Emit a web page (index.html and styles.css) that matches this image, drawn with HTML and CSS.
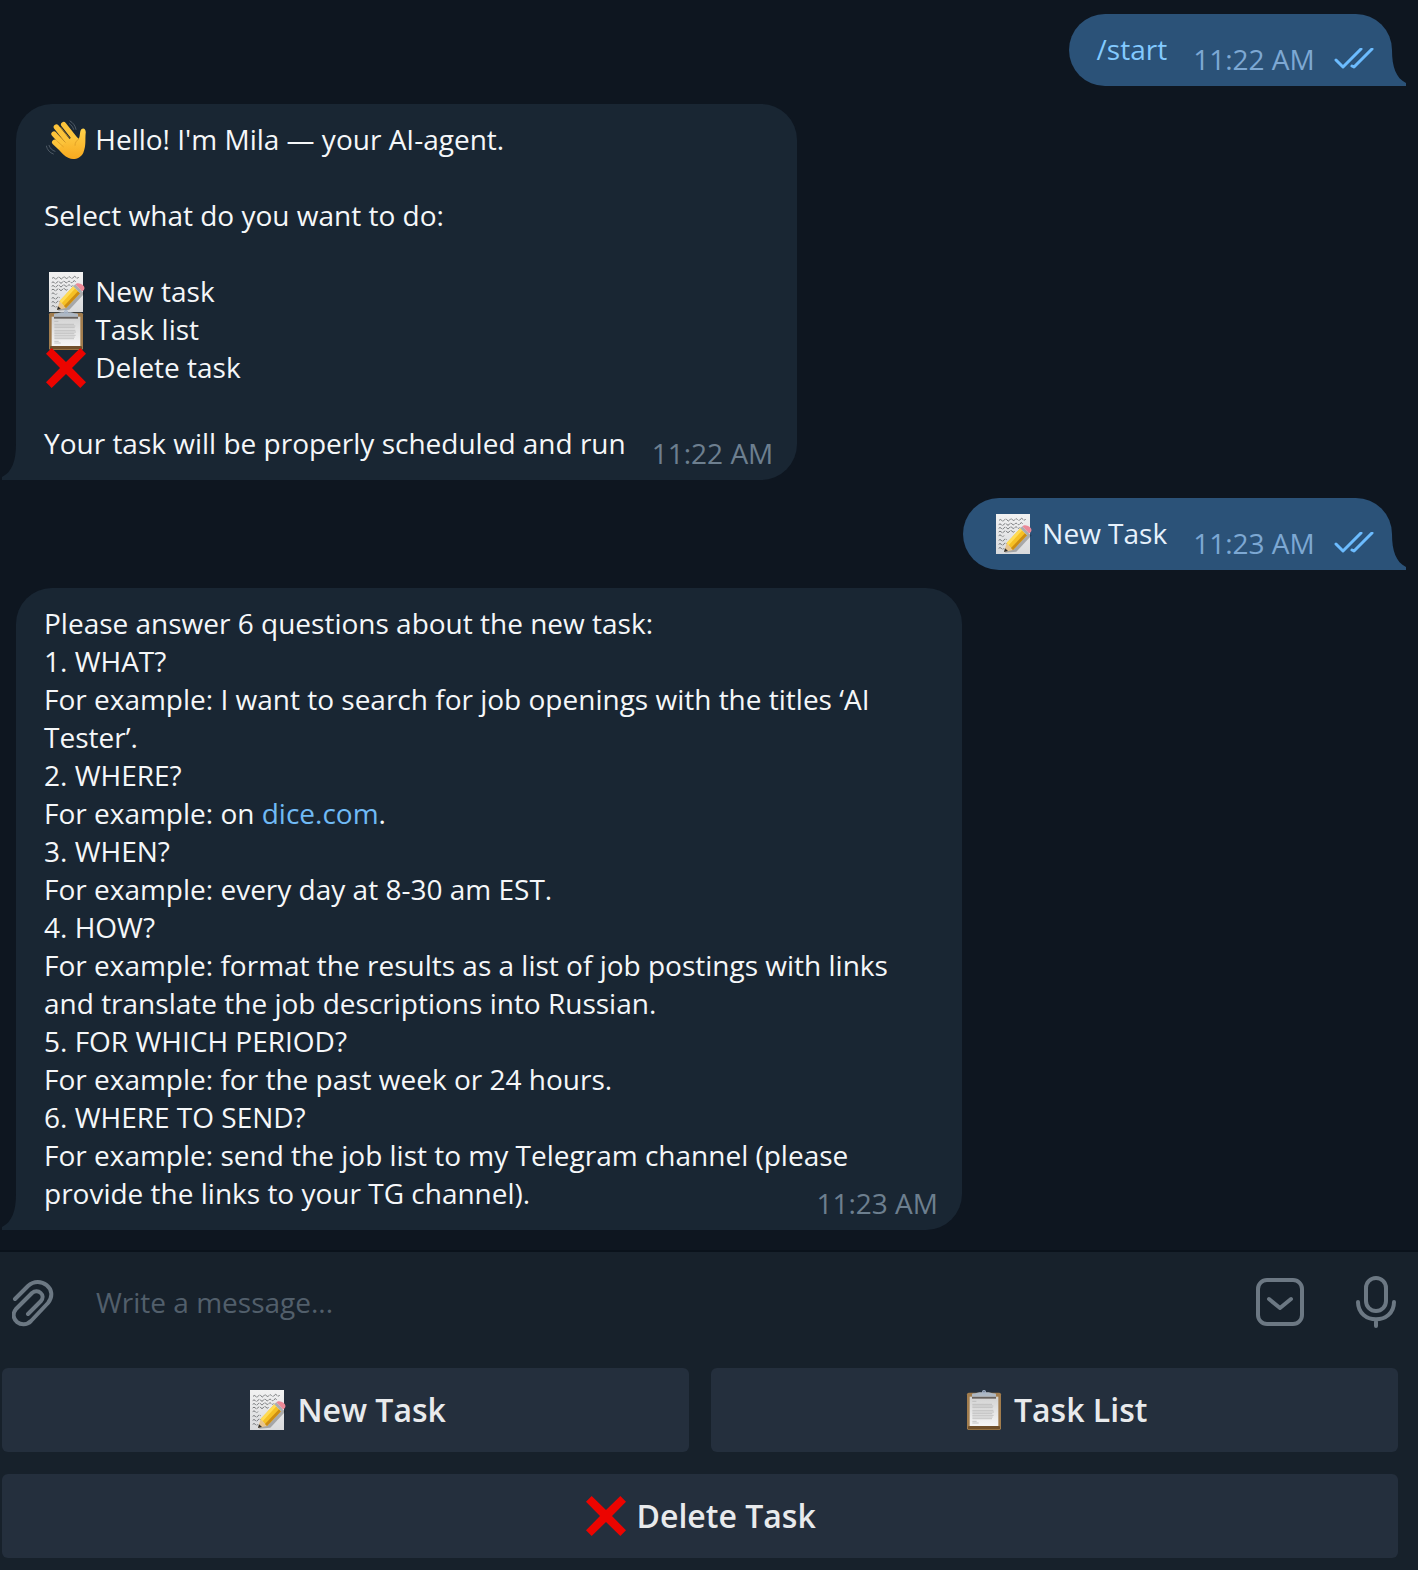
FILE: index.html
```html
<!DOCTYPE html>
<html lang="en">
<head>
  <meta charset="UTF-8" />
  <meta name="viewport" content="width=device-width, initial-scale=1.0"/>
  <title>Mila AI-agent Chat</title>
  <link rel="stylesheet" href="styles.css">
</head>
<body>

  <!-- Shared icons -->
  <svg class="icon-defs" aria-hidden="true">
    <defs>
      <linearGradient id="handFill" x1="0" y1="0" x2="0" y2="1">
        <stop offset="0" stop-color="#ffd24a"/>
        <stop offset="1" stop-color="#f7a91f"/>
      </linearGradient>
      <linearGradient id="paperFill" x1="0" y1="0" x2="0" y2="1">
        <stop offset="0" stop-color="#f2f2f2"/>
        <stop offset="1" stop-color="#d9dadc"/>
      </linearGradient>
      <linearGradient id="sheetFill" x1="0" y1="0" x2="0" y2="1">
        <stop offset="0" stop-color="#d2d2d2"/>
        <stop offset="1" stop-color="#f6f6f6"/>
      </linearGradient>
    </defs>

    <symbol id="wave" viewBox="0 0 120 120">
      <g stroke="#fcc33a" stroke-width="16" stroke-linecap="round" fill="none">
        <path d="M53 14 L88 58"/>
        <path d="M31 21 L72 72"/>
        <path d="M24 42 L64 86"/>
        <path d="M26 67 L60 98"/>
      </g>
      <path d="M52 72 L84 46 L98 56 C103 51 100 36 106 28 C113 21 121 29 119 40 C117 58 121 78 112 98 C104 115 83 121 68 114 C56 109 46 98 38 86 Z" fill="url(#handFill)"/>
      <g stroke="#d6941f" stroke-width="2" stroke-linecap="round" fill="none">
        <path d="M44 22 L70 54 M35 43 L58 67 M35 65 L52 80"/>
        <path d="M98 57 C91 62 87 68 87 76"/>
      </g>
      <g stroke="#68727d" stroke-width="2" stroke-linecap="round" fill="none">
        <path d="M72 3 C81 8 88 17 90 28 M70 11 C76 15 81 21 83 28"/>
        <path d="M1 78 C4 90 11 98 22 102 M9 76 C12 85 18 91 27 94"/>
      </g>
    </symbol>

    <symbol id="memo" viewBox="0 0 120 120">
      <path d="M9 0 H111 V120 H9 Z" fill="url(#paperFill)"/>
      <g stroke="#3f4246" stroke-width="2" fill="none" stroke-dasharray="13 2 8 3 17 2">
        <path d="M18 19 q4 -5 8 0 t8 -1 t8 0 t8 0 t8 -1 t8 0 t8 0 t8 -1 t8 0 t8 -1"/>
        <path d="M17 32 q4 -5 8 0 t8 -1 t8 0 t8 0 t8 -1 t8 0 t8 0 t8 -1 t8 0"/>
        <path d="M17 43 q4 -5 8 0 t8 -1 t8 0 t8 0 t8 -1 t8 0 t8 0 t8 -1"/>
        <path d="M17 54 q4 -5 8 0 t8 -1 t8 0 t8 0 t8 -1 t8 0"/>
        <path d="M17 65 q4 -5 8 0 t8 0"/>
        <path d="M17 79 q4 -5 8 0 t8 -1 t8 0"/>
        <path d="M17 91 q4 -5 8 0 t8 -1 t8 0"/>
        <path d="M17 103 q4 -5 8 0 t8 0"/>
      </g>
      <path d="M35 116 L70 113 L116 64 L106 58 Z" fill="#000" opacity="0.25"/>
      <path d="M33 114 L41 87 L60 108 Z" fill="#e8c48d"/>
      <path d="M33 114 L36 103 L45 111 Z" fill="#2e2e2e"/>
      <path d="M41 87 L82 43 L102 64 L60 108 Z" fill="#f6c125"/>
      <path d="M41 87 L82 43 L88 49 L47 94 Z" fill="#ffdc55"/>
      <path d="M54 102 L96 58 L102 64 L60 108 Z" fill="#cd8d13"/>
      <path d="M82 43 L88 37 L108 58 L102 64 Z" fill="#a9adb0"/>
      <path d="M88 37 C93 31 103 33 110 39 C117 45 118 53 108 58 Z" fill="#ec8997"/>
    </symbol>

    <symbol id="clipboard" viewBox="0 0 120 120">
      <rect x="9" y="8" width="102" height="112" rx="5" fill="#a17c4d"/>
      <rect x="12" y="108" width="96" height="10" rx="3" fill="#70502b"/>
      <rect x="17" y="20" width="86" height="88" fill="url(#sheetFill)"/>
      <path d="M24 20 H96 V26 H24 Z" fill="#66615e"/>
      <path d="M24 13 Q24 10 34 10 L46 7 H74 L86 10 Q96 10 96 13 V20 H24 Z" fill="#aeb8c4"/>
      <circle cx="60" cy="6" r="4" fill="none" stroke="#a6b5ca" stroke-width="4"/>
      <g stroke="#b1b1b1" stroke-width="2">
        <path d="M25 34 H37 M25 43 H84 M25 48 H88 M25 53 H86 M25 61 H88 M25 66 H90 M25 71 H85 M25 76 H89 M25 81 H86 M25 86 H84 M25 94 H38 M25 99 H44"/>
      </g>
    </symbol>

    <symbol id="cross" viewBox="0 0 120 120">
      <path d="M17 0 L60 42 L103 0 L120 17 L78 60 L120 103 L103 120 L60 78 L17 120 L0 103 L42 60 L0 17 Z" fill="#ec0400"/>
    </symbol>

    <symbol id="ticks" viewBox="0 0 40 22">
      <path d="M2 12 L9 19 L27 1 M18 18 L20 19 L38 1" fill="none" stroke="#6cbcff" stroke-width="3" stroke-linecap="round" stroke-linejoin="round"/>
    </symbol>

    <symbol id="tail" viewBox="0 0 14 36">
      <path d="M0 0 C0 17 4 28 14 33 V36 H0 Z"/>
    </symbol>
  </svg>

  <!-- Messages -->
  <main class="chat">
    <div class="message outgoing">
      <a class="link" href="#start">/start</a>
      <span class="time">11:22 AM <svg class="ticks"><use href="#ticks"/></svg></span>
      <svg class="tail"><use href="#tail"/></svg>
    </div>

    <div class="message incoming">
      <svg class="emoji"><use href="#wave"/></svg> Hello! I'm Mila — your AI-agent.<br>
      <br>
      Select what do you want to do:<br>
      <br>
      <svg class="emoji"><use href="#memo"/></svg> New task<br>
      <svg class="emoji"><use href="#clipboard"/></svg> Task list<br>
      <svg class="emoji"><use href="#cross"/></svg> Delete task<br>
      <br>
      Your task will be properly scheduled and run
      <span class="time">11:22 AM</span>
      <svg class="tail"><use href="#tail"/></svg>
    </div>

    <div class="message outgoing">
      <svg class="emoji"><use href="#memo"/></svg> New Task
      <span class="time">11:23 AM <svg class="ticks"><use href="#ticks"/></svg></span>
      <svg class="tail"><use href="#tail"/></svg>
    </div>

    <div class="message incoming">
      Please answer 6 questions about the new task:<br>
      1. WHAT?<br>
      For example: I want to search for job openings with the titles ‘AI Tester’.<br>
      2. WHERE?<br>
      For example: on <a class="link" href="#dice">dice.com</a>.<br>
      3. WHEN?<br>
      For example: every day at 8-30 am EST.<br>
      4. HOW?<br>
      For example: format the results as a list of job postings with links and translate the job descriptions into Russian.<br>
      5. FOR WHICH PERIOD?<br>
      For example: for the past week or 24 hours.<br>
      6. WHERE TO SEND?<br>
      For example: send the job list to my Telegram channel (please provide the links to your TG channel).
      <span class="time">11:23 AM</span>
      <svg class="tail"><use href="#tail"/></svg>
    </div>
  </main>

  <!-- Message input and bot keyboard -->
  <footer class="composer">
    <form class="input-row">
      <button type="button" class="icon-btn" aria-label="Attach file">
        <svg width="42" height="52" viewBox="0 -4 42 52">
          <path d="M3 19 L16 6 C28 -5 47 9 36 23 L19 41 C10 50 -4 39 4 29 L20 13 C26 8 34 15 29 21 L16 34"/>
        </svg>
      </button>
      <input type="text" id="messageInput" placeholder="Write a message..." aria-label="Write a message" />
      <button type="button" class="icon-btn" aria-label="Hide keyboard">
        <svg width="48" height="48" viewBox="0 0 48 48">
          <rect x="2" y="2" width="44" height="44" rx="9"/>
          <path d="M13 21 L24 30 L35 21"/>
        </svg>
      </button>
      <button type="button" class="icon-btn" aria-label="Record voice message">
        <svg width="40" height="52" viewBox="0 0 40 52">
          <rect x="10" y="2" width="20" height="33" rx="10"/>
          <path d="M2 26 C2 49 38 49 38 26 M20 44 V50"/>
        </svg>
      </button>
    </form>
    <div class="keyboard">
      <button type="button"><svg class="emoji"><use href="#memo"/></svg> New Task</button>
      <button type="button"><svg class="emoji"><use href="#clipboard"/></svg> Task List</button>
      <button type="button" class="wide"><svg class="emoji"><use href="#cross"/></svg> Delete Task</button>
    </div>
  </footer>

</body>
</html>
```
FILE: styles.css
```css
* {
  box-sizing: border-box;
}
body {
  font-family: "Open Sans", "Noto Sans", sans-serif;
  font-size: 28px;
  line-height: 38px;
  color: #f5f7f9;
  background: #0e1620;
  margin: 0;
  min-height: 100vh;
  display: flex;
  flex-direction: column;
}
.icon-defs {
  position: absolute;
  width: 0;
  height: 0;
}

/* Messages */
.chat {
  flex: 1;
  display: flex;
  flex-direction: column;
  gap: 18px;
  padding: 14px 26px 20px 16px;
}
.message {
  position: relative;
  max-width: 946px;
  padding: 16px 24px 18px 28px;
  border-radius: 36px;
}
.incoming {
  align-self: flex-start;
  background: #192633;
  border-bottom-left-radius: 0;
}
.outgoing {
  align-self: flex-end;
  padding-right: 18px;
  color: #e6f1fc;
  background: #2b5278;
  border-bottom-right-radius: 0;
}
.tail {
  position: absolute;
  bottom: 0;
  width: 14px;
  height: 36px;
}
.outgoing .tail {
  left: 100%;
  fill: #2b5278;
}
.incoming .tail {
  right: 100%;
  fill: #192633;
  transform: scaleX(-1);
}
.time {
  float: right;
  margin: 10px 0 -10px 26px;
  color: #6d7f8f;
}
.outgoing .time {
  color: #7da8d3;
}
.ticks {
  width: 40px;
  height: 22px;
  margin-left: 12px;
}
.link {
  color: #70baf5;
  text-decoration: none;
}
.outgoing .link {
  color: #83caff;
}
.emoji {
  width: 40px;
  height: 40px;
  margin: -4px 2px;
  vertical-align: -6px;
}

/* Composer */
.composer {
  background: #17212b;
  border-top: 2px solid #0a121b;
}
.input-row {
  display: flex;
  align-items: center;
  height: 116px;
  padding: 0 22px 16px 12px;
}
.icon-btn {
  display: flex;
  padding: 0;
  background: none;
  border: none;
  cursor: pointer;
}
.icon-btn svg {
  fill: none;
  stroke: #6c7883;
  stroke-width: 4;
  stroke-linecap: round;
  stroke-linejoin: round;
}
.icon-btn + .icon-btn {
  margin-left: 52px;
}
#messageInput {
  flex: 1;
  min-width: 0;
  margin: 0 42px;
  padding: 0;
  font: inherit;
  color: #f5f7f9;
  background: none;
  border: none;
  outline: none;
}
#messageInput::placeholder {
  color: #525f6b;
  opacity: 1;
}
.keyboard {
  display: grid;
  grid-template-columns: 1fr 1fr;
  gap: 22px;
  padding: 0 20px 12px 2px;
}
.keyboard button {
  height: 84px;
  padding: 0 0 2px;
  font-family: inherit;
  font-size: 32px;
  font-weight: 600;
  color: #e8eaec;
  background: #242f3d;
  border: none;
  border-radius: 6px;
  cursor: pointer;
}
.keyboard .emoji {
  vertical-align: -4px;
}
.keyboard .wide {
  grid-column: span 2;
}
```
